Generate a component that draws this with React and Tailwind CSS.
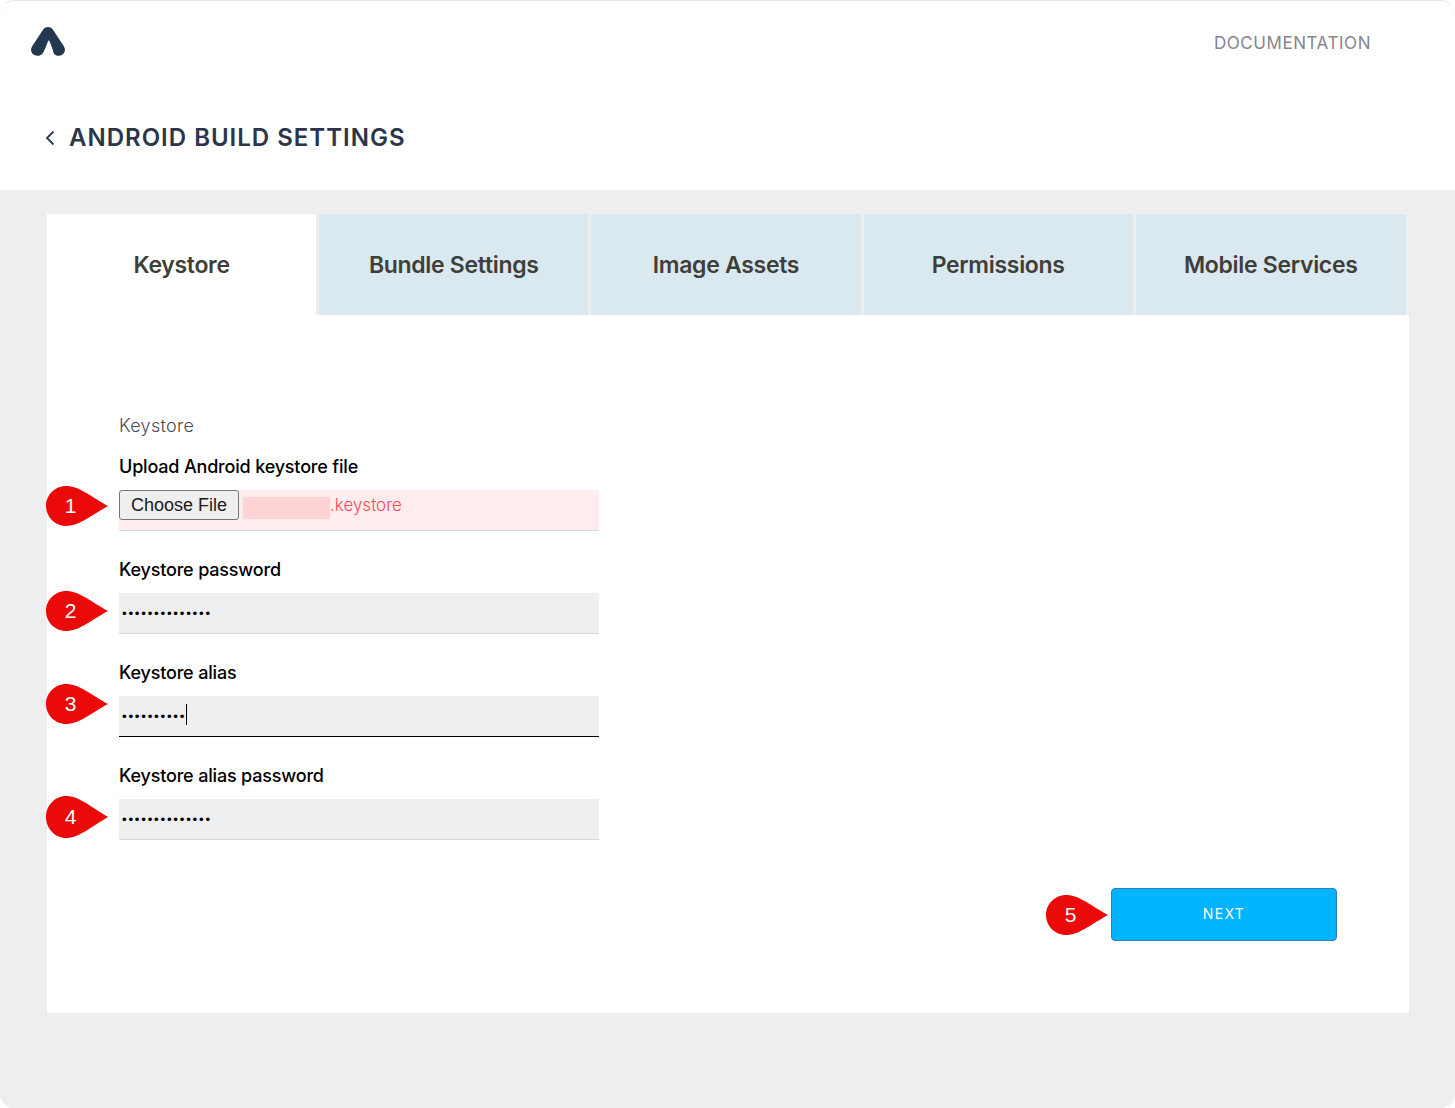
const tabs = ["Keystore", "Bundle Settings", "Image Assets", "Permissions", "Mobile Services"];

function Marker({ n, tall, className = "" }) {
  return (
    <div className={`absolute w-[62px] flex items-center ${tall ? "h-[42px]" : "h-[40px]"} ${className}`}>
      <svg width="62" height={tall ? 42 : 40} viewBox="0 0 62 40" preserveAspectRatio="none" className="absolute left-0 top-0">
        <path d="M20 0C33 0 44 10 62 20C44 30 33 40 20 40C9 40 0 31 0 20C0 9 9 0 20 0Z" fill="#ea0a0a" />
      </svg>
      <span className="relative w-[49px] text-center text-white text-[21px] font-['Liberation_Sans',sans-serif]">{n}</span>
    </div>
  );
}

function Label({ children }) {
  return <div className="text-[18px] leading-[24px] font-medium text-black tracking-[-0.18px]">{children}</div>;
}

function PasswordField({ label, n, value, focused, tall, markerClass }) {
  return (
    <div className="mt-[27px]">
      <Label>{label}</Label>
      <div className="relative mt-[11px]">
        <Marker n={n} tall={tall} className={markerClass} />
        <input
          type="password"
          readOnly
          value={value}
          className={`block w-[480px] h-[41px] pl-[3px] bg-[#eeeff1] border-b text-[13.33px] tracking-[1.75px] text-black outline-none font-['Liberation_Sans',sans-serif] ${
            focused ? "border-black" : "border-[#d6d7da]"
          }`}
        />
        {focused && <span className="absolute left-[67px] top-[8px] w-px h-[21px] bg-black" />}
      </div>
    </div>
  );
}

export default function App() {
  return (
    <div className="w-[1455px] h-[1108px] bg-white font-['Inter',sans-serif]">
      <div className="h-full flex flex-col rounded-[14px] overflow-hidden border-t border-[#e8e8e8] bg-[#eeeeee]">
        <header className="h-[189px] bg-white shrink-0">
          <div className="flex items-start justify-between pl-[31px] pr-[84px] pt-[26px]">
            <svg width="34" height="29" viewBox="0 0 34 29">
              <path
                d="M11.5 3.5C13 1 15 0 17 0C19 0 21 1 22.5 3.5L33 19.5C34.8 22.5 34 26 31.2 27.8C28.4 29.6 24.5 29 22.8 26.5C21.5 22 20 16.5 17.8 13C15.6 16.5 14.5 22 12 26C10 29 6 29.6 2.8 27.8C0 26 -0.8 22.5 1 19.5Z"
                fill="#22384f"
              />
            </svg>
            <a className="text-[17px] leading-[24px] mt-[4px] text-[#85858e] tracking-[0.55px]">DOCUMENTATION</a>
          </div>
          <div className="flex items-center pl-[45px] mt-[62px] h-[40px]">
            <svg width="10" height="16" viewBox="0 0 10 16" fill="none" stroke="#2c3a4f" strokeWidth="1.8">
              <path d="M8.5 1.5L2 8L8.5 14.5" />
            </svg>
            <h1 className="ml-[14px] text-[24px] leading-[40px] font-semibold text-[#2c3648] tracking-[1px]">
              ANDROID BUILD SETTINGS
            </h1>
          </div>
        </header>

        <main className="pt-[24px] pl-[47px]">
          <div className="flex w-[1362px] h-[101px] gap-[3px]">
            {tabs.map((t, i) => (
              <div
                key={t}
                className={`pt-[2px] flex items-center justify-center text-[23px] font-semibold text-[#3f3f3a] tracking-[-0.3px] ${
                  i === 0 ? "bg-white" : "bg-[#dae8f0]"
                } ${i === 4 ? "w-[270px]" : "w-[269.2px]"}`}
              >
                {t}
              </div>
            ))}
          </div>

          <section className="relative w-[1362px] h-[698px] bg-white pl-[72px] pt-[99px]">
            <div className="text-[18px] leading-[24px] font-light text-[#4c4c55] tracking-[0.3px]">Keystore</div>
            <div className="mt-[17px]">
              <Label>Upload Android keystore file</Label>
              <div className="relative mt-[11px] w-[480px] h-[41px] bg-[#ffecec] border-b border-[#d6d7da] flex items-start">
                <Marker n="1" className="left-[-73px] top-[-4px]" />
                <button className="w-[120px] h-[30px] rounded-[3px] border border-[#767676] bg-[#efefef] text-[18px] text-[#1a1a1a] font-['Liberation_Sans',sans-serif]">
                  Choose File
                </button>
                <span className="ml-[4px] mt-[7px] w-[87px] h-[22px] bg-[#fdd3d3]" />
                <span className="mt-[3px] text-[17px] leading-[24px] font-light text-[#f9495c]">.keystore</span>
              </div>
            </div>
            <PasswordField label="Keystore password" n="2" value="aaaaaaaaaaaaaa" markerClass="left-[-73px] top-[-2px]" />
            <PasswordField label="Keystore alias" n="3" value="aaaaaaaaaa" focused markerClass="left-[-73px] top-[-12px]" />
            <PasswordField label="Keystore alias password" n="4" value="aaaaaaaaaaaaaa" tall markerClass="left-[-73px] top-[-3px]" />

            <div className="absolute left-[1064px] top-[573px]">
              <Marker n="5" className="left-[-65px] top-[7px]" />
              <button className="w-[226px] h-[53px] pb-[2px] rounded-[4px] bg-[#00b4ff] border border-[#2f80c0] text-white text-[14px] tracking-[1.4px]">
                NEXT
              </button>
            </div>
          </section>
        </main>
      </div>
    </div>
  );
}
